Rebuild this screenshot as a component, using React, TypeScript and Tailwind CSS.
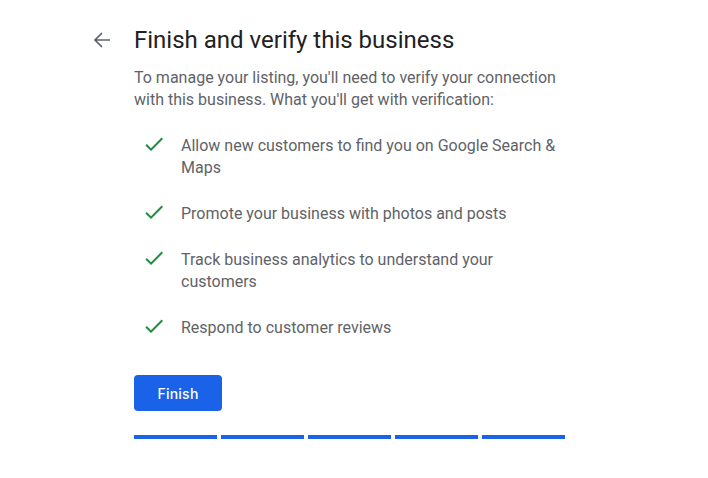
import React from "react";

const items = [
  "Allow new customers to find you on Google Search & Maps",
  "Promote your business with photos and posts",
  "Track business analytics to understand your customers",
  "Respond to customer reviews",
];

export default function App() {
  return (
    <div
      className="w-[708px] h-[478px] bg-white pl-[90px] pt-[26px]"
      style={{ fontFamily: "Roboto, 'Liberation Sans', sans-serif" }}
    >
      <div className="flex items-center h-[28px]">
        <svg width="24" height="24" viewBox="0 0 24 24" className="text-[#5f6368]" fill="none" stroke="currentColor" strokeWidth="1.7">
          <path d="M20 12H5.5M12 5l-7 7 7 7" />
        </svg>
        <h1 className="ml-[20px] text-[24px] leading-[28px] text-[#202124] -mt-[1px]">
          Finish and verify this business
        </h1>
      </div>
      <div className="ml-[44px] w-[431px]">
        <p className="mt-[13px] text-[16px] leading-[22px] text-[#5f6368]">
          To manage your listing, you'll need to verify your connection with this business. What you'll get with verification:
        </p>
        <ul className="mt-[24px] flex flex-col gap-[24px] pl-[8px]">
          {items.map((t) => (
            <li key={t} className="flex items-start">
              <svg width="24" height="22" viewBox="0 -1 24 22" className="shrink-0 text-[#1e8e3e]" fill="currentColor">
                <path d="M9 16.17L4.83 12l-1.42 1.41L9 19 21 7l-1.41-1.41z" transform="translate(0,-4)" />
              </svg>
              <span className="ml-[15px] text-[16px] leading-[22px] text-[#5f6368]">{t}</span>
            </li>
          ))}
        </ul>
        <button
          className="mt-[36px] w-[88px] h-[36px] rounded-[4px] bg-[#1a62e8] text-white text-[14px] font-medium tracking-[0.25px]"
          style={{ fontFamily: "Inter, Roboto, sans-serif" }}
        >
          Finish
        </button>
        <div className="mt-[24px] flex gap-[4px]">
          {[0, 1, 2, 3, 4].map((i) => (
            <div key={i} className="w-[83px] h-[4px] bg-[#1a62e8]" />
          ))}
        </div>
      </div>
    </div>
  );
}
